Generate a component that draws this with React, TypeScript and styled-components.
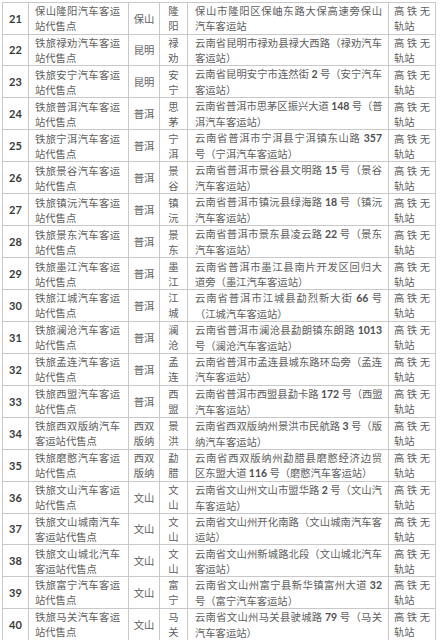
import styled, { createGlobalStyle } from "styled-components";

const GlobalStyle = createGlobalStyle`
  html, body {
    margin: 0;
    padding: 0;
    background: #ffffff;
  }
  body {
    font-family: "Noto Sans CJK SC", "Noto Sans", sans-serif;
  }
`;

const Page = styled.div`
  width: 441px;
  height: 640px;
  overflow: hidden;
  padding: 2px 0 0 2px;
  box-sizing: border-box;
`;

const Table = styled.table`
  width: 433px;
  table-layout: fixed;
  border-collapse: collapse;
  color: #606060;
  font-size: 10.3px;
`;

const Row = styled.tr`
  height: 31.65px;
`;

const Cell = styled.td<{ $w: number }>`
  width: ${(p) => p.$w}px;
  box-sizing: border-box;
  border: 1px solid #c9c9c9;
  padding: 0;
  vertical-align: middle;
  line-height: 15px;
  overflow: hidden;
`;

const NumCell = styled(Cell)`
  text-align: center;
  font-family: "Lato", "Liberation Sans", sans-serif;
  font-weight: 700;
  font-size: 11px;
  color: #3a3a3a;
`;

const TextCell = styled(Cell)<{ $pl: number; $pr: number }>`
  padding-left: ${(p) => p.$pl}px;
  padding-right: ${(p) => p.$pr}px;
`;

const CenterCell = styled(Cell)`
  text-align: center;
`;

const Line = styled.div<{ $justify?: boolean }>`
  white-space: nowrap;
  text-align: ${(p) => (p.$justify ? "justify" : "left")};
  text-align-last: ${(p) => (p.$justify ? "justify" : "left")};
`;

const CenterLine = styled.div`
  white-space: nowrap;
  text-align: center;
`;

const Num = styled.span`
  font-family: "Lato", "Liberation Sans", sans-serif;
  font-weight: 700;
  font-size: 10.5px;
  color: #505050;
`;

interface IStation {
  no: number;
  name: [string, string];
  city: string[];
  district: [string, string];
  address: [string, string];
}

const rows: IStation[] = [
  { no: 21, name: ["保山隆阳汽车客运", "站代售点"], city: ["保山"], district: ["隆", "阳"], address: ["保山市隆阳区保岫东路大保高速旁保山", "汽车客运站"] },
  { no: 22, name: ["铁旅禄劝汽车客运", "站代售点"], city: ["昆明"], district: ["禄", "劝"], address: ["云南省昆明市禄劝县禄大西路（禄劝汽车", "客运站）"] },
  { no: 23, name: ["铁旅安宁汽车客运", "站代售点"], city: ["昆明"], district: ["安", "宁"], address: ["云南省昆明安宁市连然街 2 号（安宁汽车", "客运站）"] },
  { no: 24, name: ["铁旅普洱汽车客运", "站代售点"], city: ["普洱"], district: ["思", "茅"], address: ["云南省普洱市思茅区振兴大道 148 号（普", "洱汽车客运站）"] },
  { no: 25, name: ["铁旅宁洱汽车客运", "站代售点"], city: ["普洱"], district: ["宁", "洱"], address: ["云南省普洱市宁洱县宁洱镇东山路 357", "号（宁洱汽车客运站）"] },
  { no: 26, name: ["铁旅景谷汽车客运", "站代售点"], city: ["普洱"], district: ["景", "谷"], address: ["云南省普洱市景谷县文明路 15 号（景谷", "汽车客运站）"] },
  { no: 27, name: ["铁旅镇沅汽车客运", "站代售点"], city: ["普洱"], district: ["镇", "沅"], address: ["云南省普洱市镇沅县绿海路 18 号（镇沅", "汽车客运站）"] },
  { no: 28, name: ["铁旅景东汽车客运", "站代售点"], city: ["普洱"], district: ["景", "东"], address: ["云南省普洱市景东县凌云路 22 号（景东", "汽车客运站）"] },
  { no: 29, name: ["铁旅墨江汽车客运", "站代售点"], city: ["普洱"], district: ["墨", "江"], address: ["云南省普洱市墨江县南片开发区回归大", "道旁（墨江汽车客运站）"] },
  { no: 30, name: ["铁旅江城汽车客运", "站代售点"], city: ["普洱"], district: ["江", "城"], address: ["云南省普洱市江城县勐烈新大街 66 号", "（江城汽车客运站）"] },
  { no: 31, name: ["铁旅澜沧汽车客运", "站代售点"], city: ["普洱"], district: ["澜", "沧"], address: ["云南省普洱市澜沧县勐朗镇东朗路 1013", "号（澜沧汽车客运站）"] },
  { no: 32, name: ["铁旅孟连汽车客运", "站代售点"], city: ["普洱"], district: ["孟", "连"], address: ["云南省普洱市孟连县城东路环岛旁（孟连", "汽车客运站）"] },
  { no: 33, name: ["铁旅西盟汽车客运", "站代售点"], city: ["普洱"], district: ["西", "盟"], address: ["云南省普洱市西盟县勐卡路 172 号（西盟", "汽车客运站）"] },
  { no: 34, name: ["铁旅西双版纳汽车", "客运站代售点"], city: ["西双", "版纳"], district: ["景", "洪"], address: ["云南省西双版纳州景洪市民航路 3 号（版", "纳汽车客运站）"] },
  { no: 35, name: ["铁旅磨憨汽车客运", "站代售点"], city: ["西双", "版纳"], district: ["勐", "腊"], address: ["云南省西双版纳州勐腊县磨憨经济边贸", "区东盟大道 116 号（磨憨汽车客运站）"] },
  { no: 36, name: ["铁旅文山汽车客运", "站代售点"], city: ["文山"], district: ["文", "山"], address: ["云南省文山州文山市盟华路 2 号（文山汽", "车客运站）"] },
  { no: 37, name: ["铁旅文山城南汽车", "客运站代售点"], city: ["文山"], district: ["文", "山"], address: ["云南省文山州开化南路（文山城南汽车客", "运站）"] },
  { no: 38, name: ["铁旅文山城北汽车", "客运站代售点"], city: ["文山"], district: ["文", "山"], address: ["云南省文山州新城路北段（文山城北汽车", "客运站）"] },
  { no: 39, name: ["铁旅富宁汽车客运", "站代售点"], city: ["文山"], district: ["富", "宁"], address: ["云南省文山州富宁县新华镇富州大道 32", "号（富宁汽车客运站）"] },
  { no: 40, name: ["铁旅马关汽车客运", "站代售点"], city: ["文山"], district: ["马", "关"], address: ["云南省文山州马关县驶城路 79 号（马关", "汽车客运站）"] },
];

// digits in the address are set in a latin face, like the original document
const withNums = (text: string) =>
  text.split(/(\d+)/).map((part, i) =>
    /^\d+$/.test(part) ? <Num key={i}>{part}</Num> : part
  );

const App = () => {
  return (
    <Page>
      <GlobalStyle />
      <Table>
        <tbody>
          {rows.map((r) => (
            <Row key={r.no}>
              <NumCell $w={26}>{r.no}</NumCell>
              <TextCell $w={100} $pl={6} $pr={8}>
                <Line $justify>{r.name[0]}</Line>
                <Line>{r.name[1]}</Line>
              </TextCell>
              <CenterCell $w={31}>
                {r.city.map((c) => (
                  <CenterLine key={c}>{c}</CenterLine>
                ))}
              </CenterCell>
              <CenterCell $w={28}>
                <CenterLine>{r.district[0]}</CenterLine>
                <CenterLine>{r.district[1]}</CenterLine>
              </CenterCell>
              <TextCell $w={201} $pl={7} $pr={6}>
                <Line $justify>{withNums(r.address[0])}</Line>
                <Line>{withNums(r.address[1])}</Line>
              </TextCell>
              <TextCell $w={47} $pl={5} $pr={5}>
                <Line $justify>高铁无</Line>
                <Line>轨站</Line>
              </TextCell>
            </Row>
          ))}
        </tbody>
      </Table>
    </Page>
  );
};

export default App;
